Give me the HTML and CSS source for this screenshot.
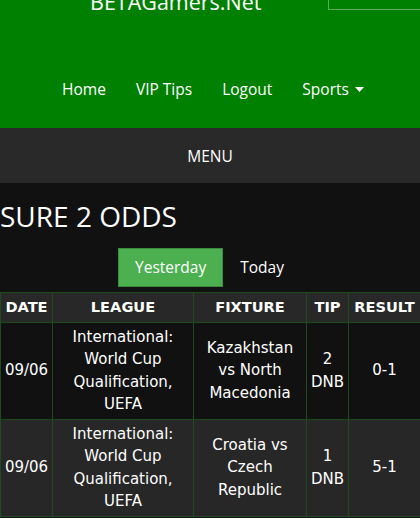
FILE: index.html
```html
<!DOCTYPE html>
<html lang="en">
<head>
<meta charset="utf-8">
<title>SURE 2 ODDS - BETAGamers.Net</title>
<link rel="stylesheet" href="styles.css">
</head>
<body>
<header class="site-header">
  <div class="brand-row">
    <div class="brand">BETAGamers.Net</div>
    <div class="search-box"></div>
  </div>
  <nav class="main-nav">
    <a class="nav-link" href="#">Home</a>
    <a class="nav-link" href="#">VIP Tips</a>
    <a class="nav-link" href="#">Logout</a>
    <a class="nav-link" href="#">Sports <svg class="caret" width="9" height="5" viewBox="0 0 9 5"><path d="M0 0H9L4.5 5Z" fill="#fff"/></svg></a>
  </nav>
</header>
<div class="menu-bar">MENU</div>
<main class="content">
  <h1 class="page-title">SURE 2 ODDS</h1>
  <div class="tabs">
    <button class="tab tab-active">Yesterday</button>
    <button class="tab">Today</button>
  </div>
  <table class="odds">
    <thead>
      <tr>
        <th class="c-date">DATE</th>
        <th class="c-league">LEAGUE</th>
        <th class="c-fixture">FIXTURE</th>
        <th class="c-tip">TIP</th>
        <th class="c-result">RESULT</th>
      </tr>
    </thead>
    <tbody>
      <tr>
        <td>09/06</td>
        <td>International: World Cup Qualification, UEFA</td>
        <td>Kazakhstan vs North Macedonia</td>
        <td>2 DNB</td>
        <td>0-1</td>
      </tr>
      <tr class="alt">
        <td>09/06</td>
        <td>International: World Cup Qualification, UEFA</td>
        <td>Croatia vs Czech Republic</td>
        <td>1 DNB</td>
        <td>5-1</td>
      </tr>
    </tbody>
  </table>
</main>
</body>
</html>
```

FILE: styles.css
```css
html, body {
  margin: 0;
  padding: 0;
  background: #111111;
  color: #ffffff;
  font-family: "Open Sans", "Noto Sans", sans-serif;
}

.site-header {
  background: #008000;
  height: 128px;
  overflow: hidden;
}

.brand-row {
  display: flex;
  align-items: flex-start;
  height: 40px;
  margin-top: -20px;
  padding-left: 90px;
}

.brand {
  font-size: 21.5px;
  line-height: 43px;
  color: #ffffff;
  width: 238px;
  flex-shrink: 0;
}

.search-box {
  box-sizing: border-box;
  width: 100px;
  height: 30px;
  border: 1px solid #5ea95e;
  flex-shrink: 0;
}

.main-nav {
  display: flex;
  justify-content: center;
  gap: 30px;
  margin-top: 59px;
  padding-left: 6px;
}

.nav-link {
  color: #ffffff;
  text-decoration: none;
  font-size: 15.5px;
  line-height: 20px;
  display: flex;
  align-items: center;
}

.caret {
  margin-left: 6px;
}

.menu-bar {
  background: #292929;
  height: 55px;
  display: flex;
  align-items: center;
  justify-content: center;
  font-size: 15.5px;
}

.content {
  padding-top: 14px;
}

.page-title {
  margin: 0;
  font-size: 28px;
  font-weight: 400;
  line-height: 38px;
}

.tabs {
  display: flex;
  justify-content: center;
  margin-top: 13px;
  padding-right: 1px;
}

.tab {
  font-family: "Open Sans", "Noto Sans", sans-serif;
  font-size: 15.5px;
  line-height: 21px;
  padding: 8px 16px;
  border: 1px solid transparent;
  background: transparent;
  color: #ffffff;
}

.tab-active {
  background: #4caf50;
  border-color: #3b8a3e;
}

.odds {
  margin-top: 5px;
  width: 420px;
  table-layout: fixed;
  border-collapse: collapse;
  font-family: "DejaVu Sans", Verdana, sans-serif;
  font-size: 15px;
}

.odds th,
.odds td {
  border: 1px solid #1f4a1d;
  padding: 3px 3px;
  text-align: center;
  vertical-align: middle;
  line-height: 22.5px;
}

.odds th {
  background: #282828;
  font-weight: 700;
  font-size: 14.6px;
}

.odds .alt td {
  background: #272727;
}

.c-date { width: 45px; }
.c-league { width: 134px; }
.c-fixture { width: 106px; }
.c-tip { width: 35px; }
.c-result { width: 65px; }
```
